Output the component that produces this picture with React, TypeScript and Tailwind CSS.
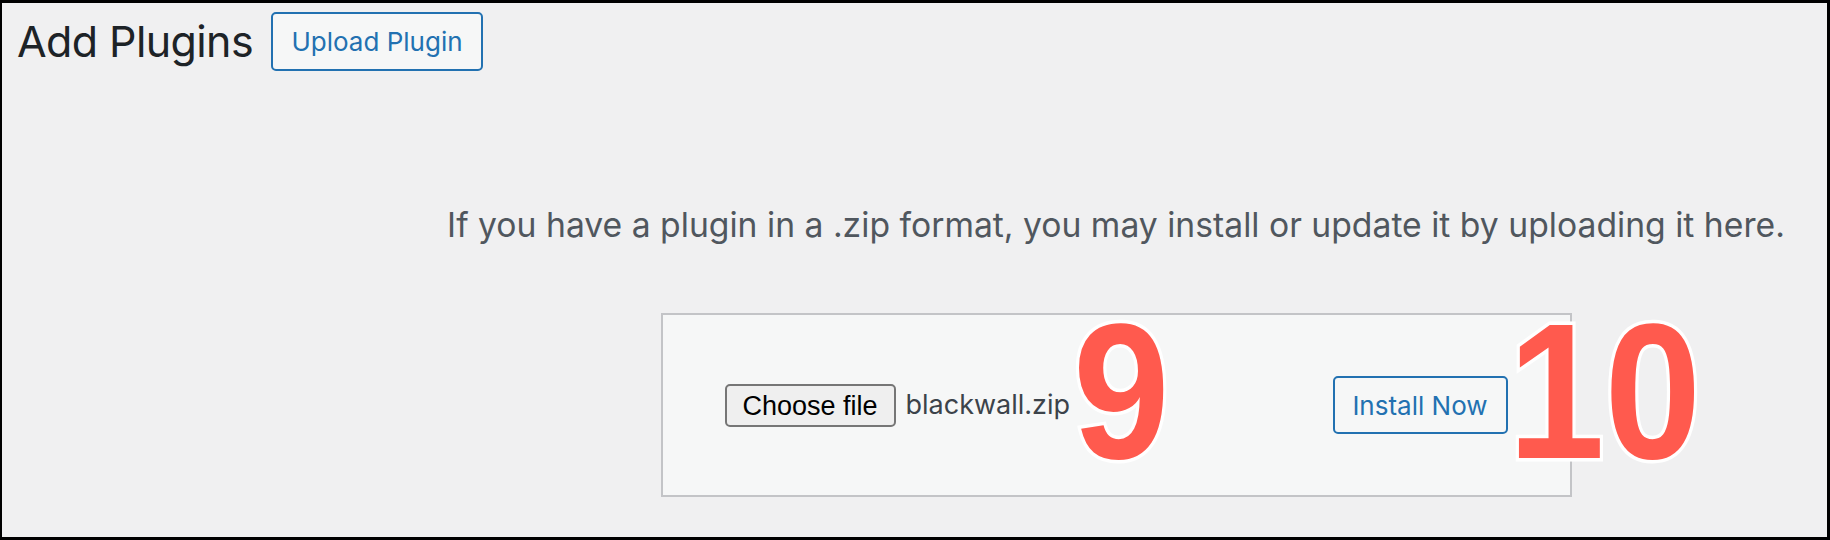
export default function App() {
  return (
    <div className="relative w-[1830px] h-[540px] bg-[#f0f0f1] border-black border-t-[3px] border-r-[3px] border-b-[3px] border-l-2 font-['Inter',sans-serif] overflow-hidden">
      {/* Header */}
      <div className="flex items-center pt-[9px] pl-[15px]">
        <h1 className="text-[43px] leading-none text-[#1d2327] font-normal tracking-[-0.6px]">Add Plugins</h1>
        <button className="ml-[18px] h-[59px] w-[212px] rounded-[5px] border-2 border-[#2271b1] bg-[#f6f7f7] text-[#2271b1] text-[26px]">
          Upload Plugin
        </button>
      </div>

      {/* Upload area */}
      <div className="flex flex-col items-center pl-[403px]">
        <p className="mt-[129px] text-[33.7px] leading-[50px] text-[#50575e]">
          If you have a plugin in a .zip format, you may install or update it by uploading it here.
        </p>
        <div className="mt-[63px] w-[911px] h-[184px] border-2 border-[#c3c4c7] bg-[#f6f7f7] flex items-center justify-between pl-[62px] pr-[62px]">
          <div className="flex items-center">
            <button className="h-[43px] w-[171px] rounded-[5px] border-2 border-[#767676] bg-[#efefef] text-black text-[27px] font-['Liberation_Sans',sans-serif]">
              Choose file
            </button>
            <span className="ml-[10px] text-[27px] text-[#3c434a]">blackwall.zip</span>
          </div>
          <button className="h-[58px] w-[175px] rounded-[5px] border-2 border-[#2271b1] bg-[#f6f7f7] text-[#2271b1] text-[26px]">
            Install Now
          </button>
        </div>
      </div>

      {/* Step markers */}
      <span className="absolute left-[1071px] top-[292px] origin-left scale-x-90 text-[193px] leading-none font-bold text-[#ff5a4e] font-['Liberation_Sans',sans-serif] [paint-order:stroke_fill] [-webkit-text-stroke:7px_white]">
        9
      </span>
      <span className="absolute left-[1506px] top-[292px] origin-left scale-x-90 text-[193px] leading-none font-bold text-[#ff5a4e] font-['Liberation_Sans',sans-serif] [paint-order:stroke_fill] [-webkit-text-stroke:7px_white]">
        10
      </span>
    </div>
  );
}
